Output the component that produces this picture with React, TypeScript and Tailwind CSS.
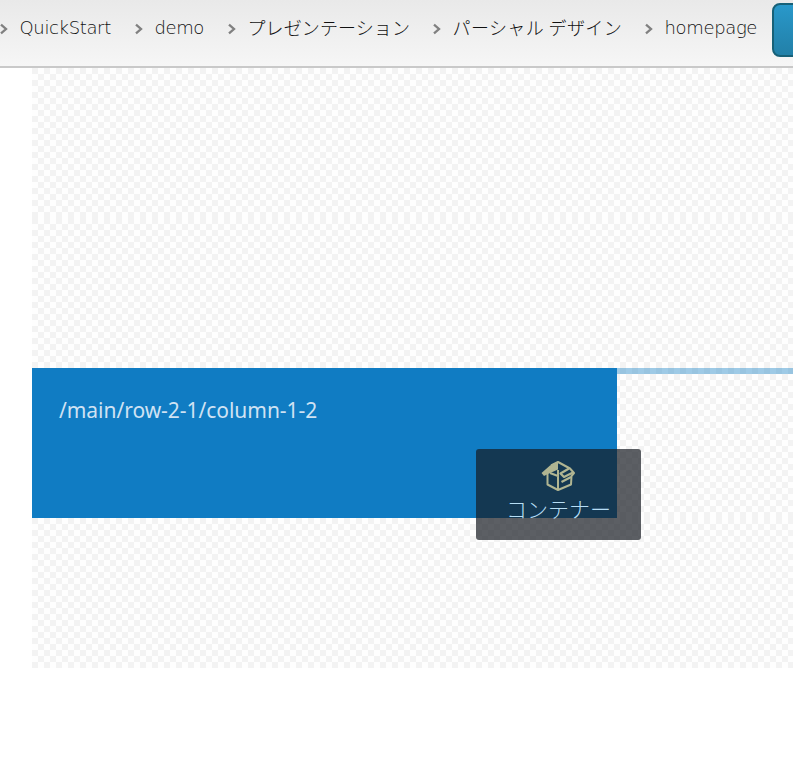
import React from 'react';

const latin = "font-['DejaVu_Sans','Noto_Sans_CJK_JP',sans-serif] font-extralight";
const kana = "font-['Noto_Sans_CJK_JP',sans-serif] font-light";

const crumbs = [
  { label: 'QuickStart', box: 'w-[135px]', text: 'text-[18px] tracking-[-0.35px] ' + latin },
  { label: 'demo', box: 'w-[93px]', text: 'text-[18px] tracking-[-0.4px] ' + latin },
  { label: 'プレゼンテーション', box: 'w-[205px]', text: 'text-[18px] tracking-[0.1px] ' + kana },
  { label: 'パーシャル デザイン', box: 'w-[212px]', text: 'text-[18px] tracking-[0.4px] ' + kana },
  { label: 'homepage', box: 'w-[124px]', text: 'text-[18px] tracking-[-0.35px] ' + latin },
];

function Chevron() {
  return (
    <svg className="mt-[2px] h-[12px] w-[9px] shrink-0" viewBox="0 0 9 12" fill="none">
      <path d="M1 1.7 6 6 1 10.3" stroke="#808080" strokeWidth="2.3" />
    </svg>
  );
}

function BoxIcon() {
  return (
    <svg className="mr-[2px] h-[32px] w-[36px] shrink-0" viewBox="0 0 36 32" fill="none" stroke="#b0b592" strokeWidth="2" strokeLinejoin="round">
      <path d="M1.5 13 10 5.5 18 1.5V9.5L9 13.5 4 16Z" fill="#b0b592" stroke="none" />
      <path d="M11 5.5 18 2 30 8.5 34 13 31.5 16 31 24.5 18 30 7.5 24.5V13M18 10V30M10 13 18 16" />
      <path d="M29 8.5 20.5 13.5 24 17 33 12.5M31 17 21.5 22" strokeWidth="2.2" />
    </svg>
  );
}

const checker =
  'bg-[conic-gradient(#f3f3f3_25%,#fefefe_0_50%,#f3f3f3_0_75%,#fefefe_0)] bg-[length:12px_12px] bg-[position:6px_0]';

export default function App() {
  return (
    <div className="relative h-[759px] w-[793px] overflow-hidden bg-white">
      <header className="flex h-[68px] items-start border-b-2 border-[#c9c9c9] bg-gradient-to-b from-[#e9e9e9] to-[#f6f6f6]">
        <nav className="flex w-[772px] shrink-0 pt-[14px]">
          {crumbs.map((c) => (
            <div key={c.label} className={'flex h-[27px] shrink-0 items-center whitespace-nowrap text-[#111] ' + c.box}>
              <Chevron />
              <span className={'ml-[10.5px] leading-[27px] ' + c.text}>{c.label}</span>
            </div>
          ))}
        </nav>
        <button className="mt-[3px] h-[54px] w-[60px] shrink-0 rounded-[8px] border-2 border-[#176178] bg-gradient-to-b from-[#2998ca] to-[#2280a8]" />
      </header>
      <main className="ml-[32px]">
        <div className={'h-[150px] ' + checker} />
        <div className={'h-[150px] ' + checker} />
        <div className={'flex h-[150px] ' + checker}>
          <div className="w-[585px] bg-[#107cc3] pl-[27px] pt-[27px] font-['Noto_Sans',sans-serif] text-[21px] leading-[30px] tracking-[-0.04px] text-[#cfe2f3]">
            /main/row-2-1/column-1-2
          </div>
          <div className="h-[6px] flex-1 bg-[#107cc3]/40" />
        </div>
        <div className={'h-[150px] ' + checker} />
      </main>
      <div className="absolute left-[476px] top-[449px] flex h-[91px] w-[165px] flex-col items-center rounded-[3px] bg-[#171b22]/70 pt-[11px]">
        <BoxIcon />
        <div className="whitespace-nowrap font-['Noto_Sans_CJK_JP',sans-serif] text-[21px] font-light leading-[32px] text-[#b7def5]">
          コンテナー
        </div>
      </div>
    </div>
  );
}
